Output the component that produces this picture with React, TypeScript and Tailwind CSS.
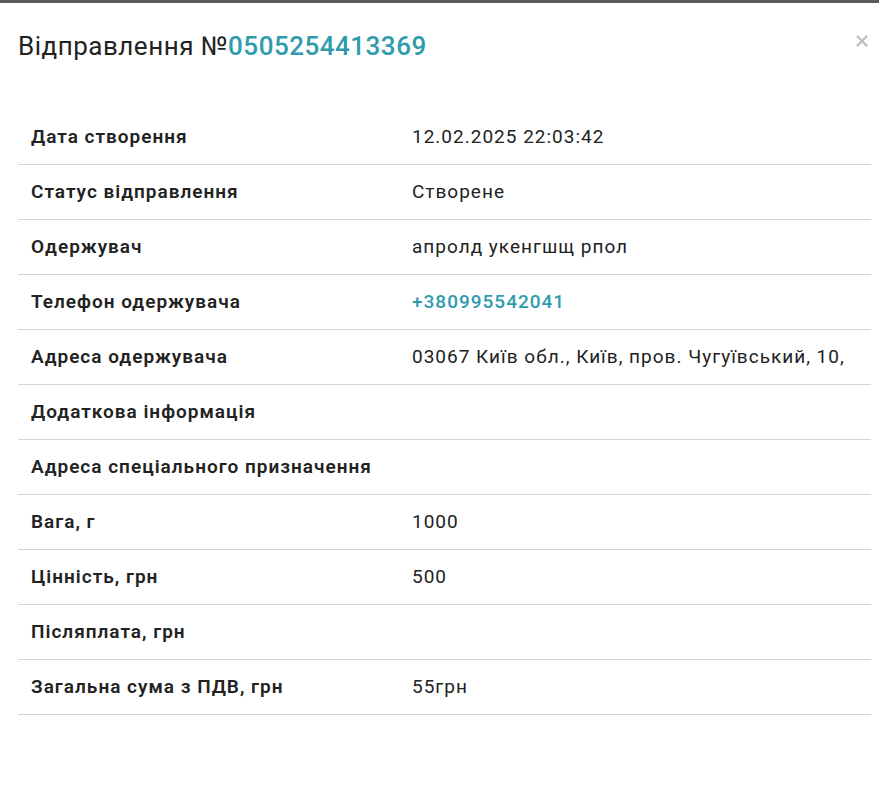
import { X } from 'lucide-react';

type Row = { label: string; value?: string; link?: boolean };

const ROWS: Row[] = [
  { label: 'Дата створення', value: '12.02.2025 22:03:42' },
  { label: 'Статус відправлення', value: 'Створене' },
  { label: 'Одержувач', value: 'апролд укенгшщ рпол' },
  { label: 'Телефон одержувача', value: '+380995542041', link: true },
  { label: 'Адреса одержувача', value: '03067 Київ обл., Київ, пров. Чугуївський, 10,' },
  { label: 'Додаткова інформація' },
  { label: 'Адреса спеціального призначення' },
  { label: 'Вага, г', value: '1000' },
  { label: 'Цінність, грн', value: '500' },
  { label: 'Післяплата, грн' },
  { label: 'Загальна сума з ПДВ, грн', value: '55грн' },
];

export default function App() {
  return (
    <div className="min-h-[786px] bg-white font-['Roboto',sans-serif] text-[#222]">
      <div className="h-[3px] bg-[#5b5b5b]" />
      <div className="flex items-start justify-between pl-[18px] pr-[8px] pt-[27px]">
        <h1 className="text-[26px] leading-[32px] tracking-[0.5px] text-[#222]">
          Відправлення №<span className="text-[#2e9bad] font-medium">0505254413369</span>
        </h1>
        <button className="mt-[2px] text-[#bdbdbd]" aria-label="Закрити">
          <X className="w-[18px] h-[18px]" strokeWidth={3} />
        </button>
      </div>
      <table className="mt-[47px] ml-[18px] w-[853px] border-collapse text-[19px] tracking-[1px]">
        <tbody>
          {ROWS.map(row => (
            <tr key={row.label} className="border-b border-[#d4d4d4] h-[55px]">
              <td className="w-[382px] pl-[13px] pt-[1px] font-semibold">{row.label}</td>
              <td className={`pl-[12px] pt-[1px] ${row.link ? 'text-[#2e9bad] font-medium' : ''}`}>
                {row.value}
              </td>
            </tr>
          ))}
        </tbody>
      </table>
    </div>
  );
}
